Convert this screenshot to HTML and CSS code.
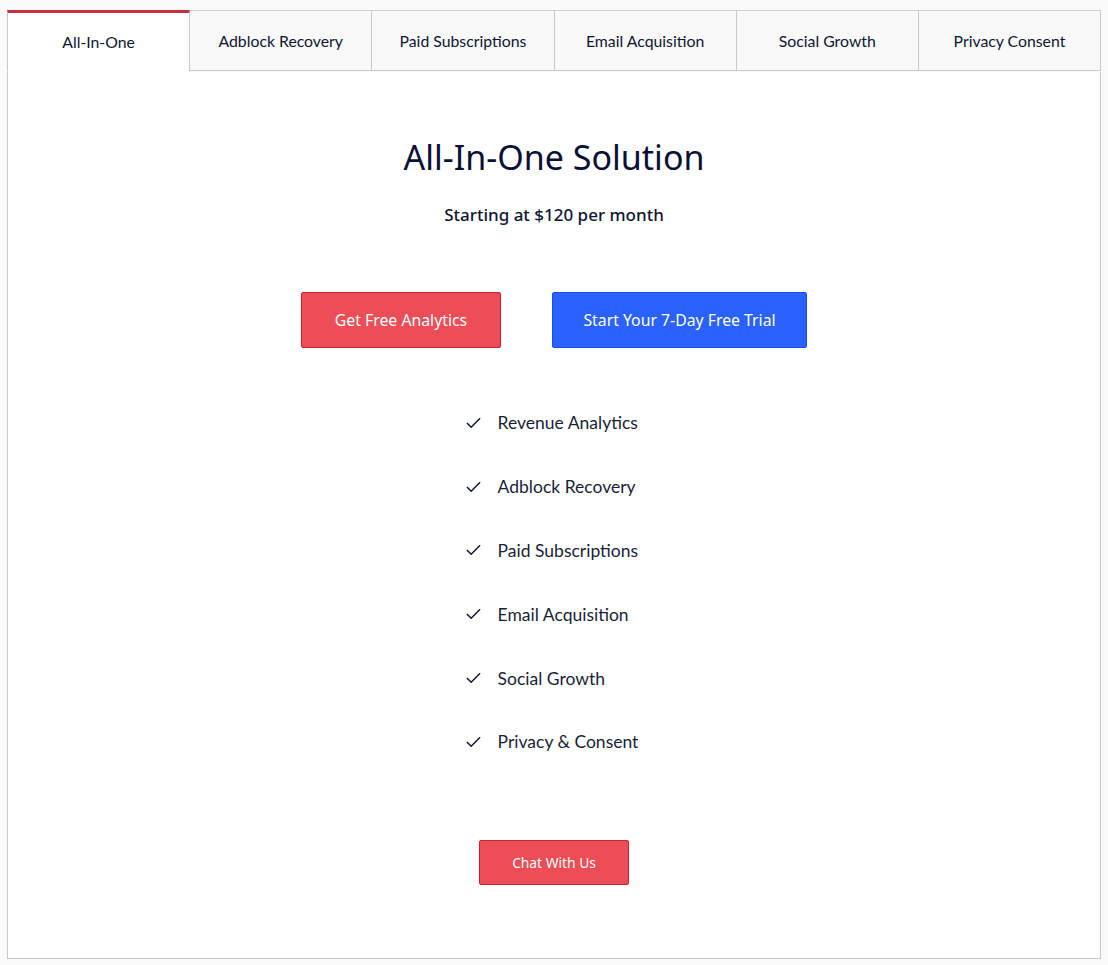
FILE: index.html
```html
<!DOCTYPE html>
<html lang="en">
<head>
  <meta charset="UTF-8">
  <meta name="viewport" content="width=device-width, initial-scale=1.0">
  <title>Pricing</title>
  <link rel="stylesheet" href="styles.css">
</head>
<body>
  <div class="container">
    <div class="tabs">
      <div class="tab active">All-In-One</div>
      <div class="tab">Adblock Recovery</div>
      <div class="tab">Paid Subscriptions</div>
      <div class="tab">Email Acquisition</div>
      <div class="tab">Social Growth</div>
      <div class="tab">Privacy Consent</div>
    </div>

    <div class="panel">
      <div class="title">All-In-One Solution</div>
      <div class="subtitle">Starting at $120 per month</div>

      <div class="buttons">
        <button class="btn red">Get Free Analytics</button>
        <button class="btn blue">Start Your 7-Day Free Trial</button>
      </div>

      <ul class="features">
        <li><svg class="check" viewBox="0 0 16 12"><polyline points="1,6 5.5,10.5 15,1"/></svg>Revenue Analytics</li>
        <li><svg class="check" viewBox="0 0 16 12"><polyline points="1,6 5.5,10.5 15,1"/></svg>Adblock Recovery</li>
        <li><svg class="check" viewBox="0 0 16 12"><polyline points="1,6 5.5,10.5 15,1"/></svg>Paid Subscriptions</li>
        <li><svg class="check" viewBox="0 0 16 12"><polyline points="1,6 5.5,10.5 15,1"/></svg>Email Acquisition</li>
        <li><svg class="check" viewBox="0 0 16 12"><polyline points="1,6 5.5,10.5 15,1"/></svg>Social Growth</li>
        <li><svg class="check" viewBox="0 0 16 12"><polyline points="1,6 5.5,10.5 15,1"/></svg>Privacy &amp; Consent</li>
      </ul>

      <div class="chat">
        <button class="btn red small">Chat With Us</button>
      </div>
    </div>
  </div>
</body>
</html>
```

FILE: styles.css
```css
body {
  margin: 0;
  background-color: #fafafa;
  font-family: Lato, "Open Sans", sans-serif;
  color: #0f1633;
}
.container {
  padding: 10px 7px 0 7px;
}
.tabs {
  display: flex;
}
.tab {
  flex: 1;
  height: 59px;
  display: flex;
  align-items: center;
  justify-content: center;
  font-size: 15.8px;
  background-color: #f9f9f9;
  border-top: 1px solid #d0d0d0;
  border-bottom: 1px solid #c8c8c8;
  border-right: 1px solid #c8c8c8;
}
.tab:first-child {
  border-left: 1px solid #c8c8c8;
}
.tab.active {
  background-color: #ffffff;
  border-top: 3px solid #c7303b;
  border-bottom: 1px solid #ffffff;
  height: 56px;
  padding-bottom: 2px;
}
.panel {
  background-color: #ffffff;
  border: 1px solid #c8c8c8;
  border-top: none;
  padding: 65px 0 73px 0;
  text-align: center;
}
.title {
  font-family: "Noto Sans", Lato, sans-serif;
  font-size: 34px;
  line-height: 40px;
  color: #0a1035;
}
.subtitle {
  margin-top: 26px;
  font-family: "Noto Sans", Lato, sans-serif;
  font-size: 17px;
  font-weight: 500;
  line-height: 24px;
}
.buttons {
  margin-top: 65px;
  display: flex;
  justify-content: center;
  gap: 51px;
}
.btn {
  height: 56px;
  font-family: "Noto Sans", Lato, sans-serif;
  font-size: 15.8px;
  color: #ffffff;
  border-radius: 2px;
  cursor: pointer;
}
.red {
  width: 200px;
  background-color: #ec4d56;
  border: 1px solid #cf1f2e;
}
.blue {
  width: 255px;
  background-color: #2962ff;
  border: 1px solid #1a4fe6;
}
.small {
  width: 150px;
  height: 45px;
  font-size: 13.8px;
}
.features {
  list-style: none;
  margin: 43px auto 0 auto;
  padding: 0;
  width: fit-content;
  text-align: left;
  transform: translateX(-2px);
}
.features li {
  display: flex;
  align-items: center;
  height: 63.8px;
  font-size: 17.5px;
  color: #1a1f38;
}
.check {
  width: 15px;
  height: 12px;
  margin-right: 17px;
  fill: none;
  stroke: #0f1633;
  stroke-width: 1.6;
}
.chat {
  margin-top: 66px;
}
```
